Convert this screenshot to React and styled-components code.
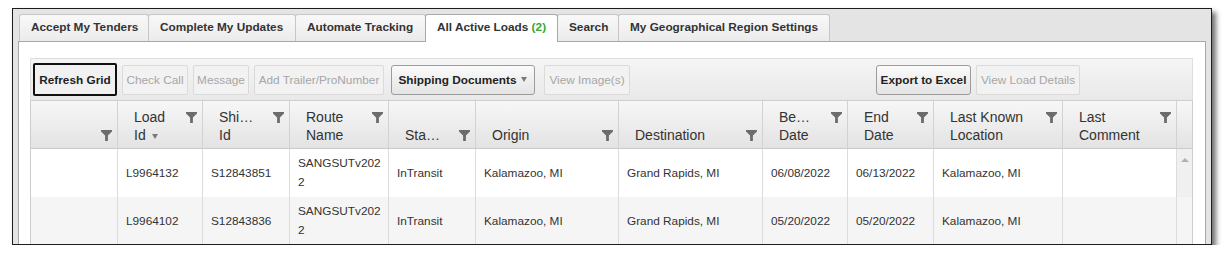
import React from "react";
import styled, { createGlobalStyle } from "styled-components";

const GlobalStyle = createGlobalStyle`
  body {
    margin: 0;
    background: #fff;
    font-family: "Liberation Sans", Arial, sans-serif;
  }
`;

const Frame = styled.div`
  box-sizing: border-box;
  width: 1200px;
  height: 237px;
  margin: 8px 0 0 12px;
  padding: 5px 5px 0 5px;
  border: 1px solid #1c1c1c;
  background: #e4e4e4;
  box-shadow: 4px 4px 5px rgba(0, 0, 0, 0.55);
  overflow: hidden;
`;

const Tabs = styled.div`
  display: flex;
  align-items: flex-start;
  height: 27px;
  padding-left: 1px;
`;

const Tab = styled.div`
  box-sizing: border-box;
  position: relative;
  z-index: ${(p) => (p.$active ? 2 : 1)};
  width: ${(p) => p.$w}px;
  height: ${(p) => (p.$active ? 28 : 27)}px;
  margin-right: -1px;
  padding-left: 11px;
  border: 1px solid ${(p) => (p.$active ? "#a8a8a8" : "#c6c6c6")};
  border-bottom: none;
  border-radius: 3px 3px 0 0;
  background: ${(p) =>
    p.$active ? "#fff" : "linear-gradient(#f8f8f8, #ebebeb)"};
  font-size: 11.8px;
  font-weight: 700;
  line-height: 24px;
  color: #333;
  white-space: nowrap;
`;

const Count = styled.span`
  color: #35a834;
`;

const Panel = styled.div`
  height: 260px;
  padding: 16px 12px 0 11px;
  border: 1px solid #a8a8a8;
  background: #fff;
`;

const Toolbar = styled.div`
  box-sizing: border-box;
  display: flex;
  align-items: center;
  gap: 5px;
  height: 43px;
  padding: 0 112px 0 2px;
  border: 1px solid #dedede;
  border-bottom-color: #cfcfcf;
  background: linear-gradient(#f5f5f5, #e9e9e9);
`;

const Button = styled.button`
  box-sizing: border-box;
  display: inline-flex;
  align-items: center;
  justify-content: center;
  gap: 5px;
  width: ${(p) => p.$w}px;
  height: 30px;
  padding: 0;
  border: 1px solid #9c9c9c;
  border-radius: 3px;
  background: linear-gradient(#fbfbfb, #e4e4e4);
  font-family: "Liberation Sans", Arial, sans-serif;
  font-size: 11.8px;
  font-weight: 700;
  color: #222;
  white-space: nowrap;

  &:disabled {
    border-color: #dadada;
    border-radius: 2px;
    background: #f2f2f2;
    font-weight: 400;
    color: #a6a6a6;
  }
`;

const FocusButton = styled(Button)`
  height: 33px;
  border: 2px solid #111;
  border-radius: 2px;
  background: #f1f1f1;
`;

const DropButton = styled(Button)`
  margin: 0 4px 0 2px;
`;

const RightGroup = styled.div`
  display: flex;
  gap: 5px;
  margin-left: auto;
`;

const Caret = styled.span`
  display: inline-block;
  vertical-align: middle;
  width: 0;
  height: 0;
  border-left: 3.5px solid transparent;
  border-right: 3.5px solid transparent;
  border-top: 5px solid #7a7a7a;
  margin-left: ${(p) => p.$ml || 0}px;
`;

const Grid = styled.div`
  display: grid;
  grid-template-columns: 87px 85px 87px 99px 87px 143px 144px 85px 86px 129px 114px 15px;
  grid-auto-rows: 48px;
  border-left: 1px solid #cdcdcd;
  border-right: 1px solid #cdcdcd;
`;

const HeaderCell = styled.div`
  box-sizing: border-box;
  display: flex;
  align-items: flex-end;
  padding: 0 5px 4px 16px;
  border-right: 1px solid #d2d2d2;
  border-bottom: 1px solid #cbcbcb;
  background: linear-gradient(#f7f7f7, #e3e3e3);
  font-size: 14px;
  line-height: 18px;
  color: #333;
`;

const HeadInner = styled.div`
  display: flex;
  align-items: flex-start;
  width: 100%;
`;

const HeadTitle = styled.div`
  flex: 1;
  min-height: 18px;
`;

const FilterIcon = styled.svg`
  flex: none;
  margin-top: 4px;
`;

const ScrollHead = styled.div`
  border-bottom: 1px solid #cbcbcb;
  background: linear-gradient(#f7f7f7, #e3e3e3);
`;

const Cell = styled.div`
  box-sizing: border-box;
  display: flex;
  align-items: center;
  padding: 0 6px 0 8px;
  border-right: 1px solid #dcdcdc;
  background: ${(p) => (p.$alt ? "#f5f5f5" : "#fff")};
  font-size: 11.8px;
  line-height: 19px;
  color: #333;
`;

const Wrap = styled.span`
  width: 84px;
  word-break: break-all;
`;

const ScrollCell = styled.div`
  display: flex;
  justify-content: center;
  padding-top: 9px;
  box-sizing: border-box;
  background: ${(p) => (p.$alt ? "#f5f5f5" : "#f0f0f0")};
`;

const UpArrow = styled.span`
  width: 0;
  height: 0;
  border-left: 4px solid transparent;
  border-right: 4px solid transparent;
  border-bottom: 4px solid #b0b0b0;
`;

const Filter = () => (
  <FilterIcon width="11" height="11" viewBox="0 0 11 11">
    <path d="M0 0 H11 V1.6 L6.9 5.6 V11 H4.1 V5.6 L0 1.6 Z" fill="#6c6c6c" />
  </FilterIcon>
);

const tabs = [
  { label: "Accept My Tenders", w: 130 },
  { label: "Complete My Updates", w: 148 },
  { label: "Automate Tracking", w: 131 },
  { label: "All Active Loads", w: 133, count: 2, active: true },
  { label: "Search", w: 62 },
  { label: "My Geographical Region Settings", w: 212 },
];

const columns = [
  { title: "" },
  { title: "Load", second: "Id", sorted: true },
  { title: "Shi…", second: "Id" },
  { title: "Route", second: "Name" },
  { title: "Sta…" },
  { title: "Origin" },
  { title: "Destination" },
  { title: "Be…", second: "Date" },
  { title: "End", second: "Date" },
  { title: "Last Known", second: "Location" },
  { title: "Last", second: "Comment" },
];

const rows = [
  {
    load: "L9964132",
    ship: "S12843851",
    route: "SANGSUTv2022",
    status: "InTransit",
    origin: "Kalamazoo, MI",
    dest: "Grand Rapids, MI",
    begin: "06/08/2022",
    end: "06/13/2022",
    location: "Kalamazoo, MI",
    comment: "",
  },
  {
    load: "L9964102",
    ship: "S12843836",
    route: "SANGSUTv2022",
    status: "InTransit",
    origin: "Kalamazoo, MI",
    dest: "Grand Rapids, MI",
    begin: "05/20/2022",
    end: "05/20/2022",
    location: "Kalamazoo, MI",
    comment: "",
  },
];

const App = () => {
  return (
    <>
      <GlobalStyle />
      <Frame>
        <Tabs>
          {tabs.map((t) => (
            <Tab key={t.label} $w={t.w} $active={t.active}>
              {t.label}
              {t.count !== undefined && <Count> ({t.count})</Count>}
            </Tab>
          ))}
        </Tabs>
        <Panel>
          <Toolbar>
            <FocusButton $w={84}>Refresh Grid</FocusButton>
            <Button $w={66} disabled>
              Check Call
            </Button>
            <Button $w={56} disabled>
              Message
            </Button>
            <Button $w={130} disabled>
              Add Trailer/ProNumber
            </Button>
            <DropButton $w={144}>
              Shipping Documents
              <Caret />
            </DropButton>
            <Button $w={86} disabled>
              View Image(s)
            </Button>
            <RightGroup>
              <Button $w={95}>Export to Excel</Button>
              <Button $w={104} disabled>
                View Load Details
              </Button>
            </RightGroup>
          </Toolbar>
          <Grid>
            {columns.map((c, i) => (
              <HeaderCell key={i}>
                <HeadInner>
                  <HeadTitle>
                    {c.title}
                    {c.second && <br />}
                    {c.second}
                    {c.sorted && <Caret $ml={6} />}
                  </HeadTitle>
                  <Filter />
                </HeadInner>
              </HeaderCell>
            ))}
            <ScrollHead />
            {rows.map((r, i) => (
              <React.Fragment key={r.load}>
                <Cell $alt={i % 2 === 1} />
                <Cell $alt={i % 2 === 1}>{r.load}</Cell>
                <Cell $alt={i % 2 === 1}>{r.ship}</Cell>
                <Cell $alt={i % 2 === 1}>
                  <Wrap>{r.route}</Wrap>
                </Cell>
                <Cell $alt={i % 2 === 1}>{r.status}</Cell>
                <Cell $alt={i % 2 === 1}>{r.origin}</Cell>
                <Cell $alt={i % 2 === 1}>{r.dest}</Cell>
                <Cell $alt={i % 2 === 1}>{r.begin}</Cell>
                <Cell $alt={i % 2 === 1}>{r.end}</Cell>
                <Cell $alt={i % 2 === 1}>{r.location}</Cell>
                <Cell $alt={i % 2 === 1}>{r.comment}</Cell>
                <ScrollCell $alt={i % 2 === 1}>{i === 0 && <UpArrow />}</ScrollCell>
              </React.Fragment>
            ))}
          </Grid>
        </Panel>
      </Frame>
    </>
  );
};

export default App;
